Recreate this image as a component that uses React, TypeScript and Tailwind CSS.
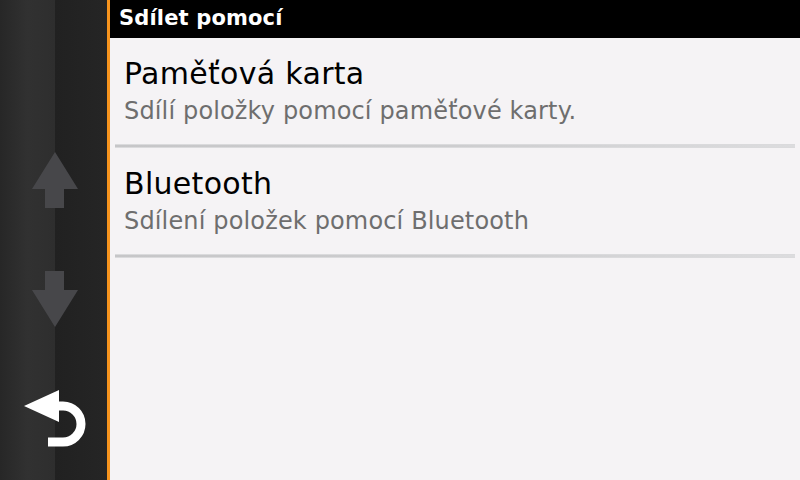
import React from 'react'

const items = [
    { title: 'Paměťová karta', sub: 'Sdílí položky pomocí paměťové karty.' },
    { title: 'Bluetooth', sub: 'Sdílení položek pomocí Bluetooth' },
]

const Sidebar = () => {
    return (
        <aside className="relative w-[107px] h-full flex shrink-0">
            <div className="w-[55px] h-full bg-gradient-to-r from-[#272727] via-[#313131] to-[#2e2e2e]" />
            <div className="w-[52px] h-full bg-gradient-to-r from-[#212121] to-[#252525]" />
            {/* arrows + back */}
            <svg className="absolute left-0 top-0" width="107" height="480" viewBox="0 0 107 480">
                <polygon points="55,152 78,189 64,189 64,208 45,208 45,189 32,189" fill="#47474a" />
                <polygon points="45,271 64,271 64,290 78,290 55,327 32,290 45,290" fill="#47474a" />
                <polygon points="24,406 59,390 59,422" fill="#ffffff" />
                <path d="M54 406 H63 A18 18 0 0 1 63 442 H48" fill="none" stroke="#ffffff" strokeWidth="9" />
            </svg>
        </aside>
    )
}

export default function App() {
    return (
        <div className="w-[800px] h-[480px] flex overflow-hidden bg-[#f5f3f5]" style={{ fontFamily: '"DejaVu Sans", Verdana, sans-serif' }}>
            <Sidebar />
            <div className="w-[3px] h-full bg-[#f7941d] shrink-0" />
            <main className="flex-1 flex flex-col">
                <header className="h-[38px] bg-black flex items-center pl-[9px] text-white font-bold text-[21px] tracking-[0.15px]">
                    Sdílet pomocí
                </header>
                {items.map((it) => (
                    <section key={it.title}>
                        <div className="pt-[18px] pb-[18px] pl-[14px]">
                            <div className="text-[30px] leading-[36px] tracking-[0.3px] text-black">{it.title}</div>
                            <div className="mt-[5px] text-[24px] leading-[29px] tracking-[0.15px] text-[#6e6e6e]">{it.sub}</div>
                        </div>
                        <div className="mx-[5px] h-[4px] bg-gradient-to-r from-[#c6c6c8] via-[#cdcdcf] to-[#dcdcde] border-y border-[#dadadc]" />
                    </section>
                ))}
            </main>
        </div>
    )
}
